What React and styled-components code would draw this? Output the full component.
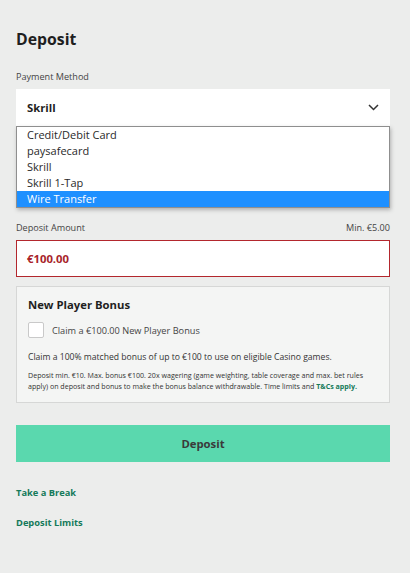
import React from "react";
import styled, { createGlobalStyle } from "styled-components";

const GlobalStyle = createGlobalStyle`
  html, body {
    margin: 0;
    padding: 0;
    background: #ecedec;
  }
  body {
    font-family: "Open Sans", "Noto Sans", sans-serif;
    color: #222;
  }
`;

const Page = styled.div`
  width: 410px;
  box-sizing: border-box;
  padding: 27px 20px 40px 16px;
  display: flex;
  flex-direction: column;
`;

const Title = styled.h1`
  margin: 0;
  font-size: 15.8px;
  font-weight: 700;
  color: #1f1f1f;
  line-height: 24px;
`;

const LabelRow = styled.div`
  display: flex;
  justify-content: space-between;
  align-items: center;
  font-size: 9.1px;
  color: #444;
  margin-top: ${(p) => p.top || 0}px;
  margin-bottom: 6px;
  line-height: 12px;
`;

const SelectWrap = styled.div`
  position: relative;
`;

const SelectBox = styled.div`
  height: 37px;
  background: #fff;
  display: flex;
  align-items: center;
  justify-content: space-between;
  padding: 0 11px;
  font-size: 11.3px;
  font-weight: 700;
  color: #1f1f1f;
`;

const Menu = styled.ul`
  position: absolute;
  left: 0;
  right: 0;
  top: 37px;
  margin: 0;
  padding: 0;
  list-style: none;
  background: #fff;
  border: 1px solid #8f8f8f;
  box-shadow: 1px 2px 4px rgba(0, 0, 0, 0.25);
  z-index: 2;
`;

const Option = styled.li`
  height: 16px;
  line-height: 16px;
  padding-left: 10px;
  font-size: 11px;
  color: ${(p) => (p.active ? "#fff" : "#2a2a2a")};
  background: ${(p) => (p.active ? "#1e90ff" : "transparent")};
`;

const HiddenField = styled.div`
  height: 38px;
  box-sizing: border-box;
  margin-top: 37px;
  background: #fff;
  border: 1px solid #b3272d;
`;

const AmountBox = styled.div`
  height: 37px;
  box-sizing: border-box;
  background: #fff;
  border: 1.5px solid #b3272d;
  display: flex;
  align-items: center;
  padding-left: 10px;
  font-size: 11.3px;
  font-weight: 700;
  color: #a8242a;
`;

const BonusCard = styled.div`
  margin-top: 9px;
  background: #f4f5f4;
  border: 1px solid #d6d7d6;
  padding: 10px 11px 11px 11px;
`;

const BonusTitle = styled.div`
  font-size: 11.3px;
  font-weight: 700;
  color: #1f1f1f;
  line-height: 16px;
`;

const CheckRow = styled.label`
  display: flex;
  align-items: center;
  gap: 8px;
  margin-top: 9px;
  font-size: 9.2px;
  color: #444;
`;

const CheckBox = styled.span`
  width: 14px;
  height: 14px;
  background: #fff;
  border: 1px solid #c9c9c9;
  border-radius: 2px;
`;

const BodyText = styled.p`
  margin: 13px 0 0;
  font-size: 8.6px;
  color: #333;
  line-height: 12px;
`;

const SmallText = styled.p`
  margin: 7px 0 0;
  font-size: 7.1px;
  color: #333;
  line-height: 10.5px;
`;

const TcLink = styled.span`
  color: #157a5a;
  font-weight: 700;
`;

const DepositButton = styled.button`
  margin-top: 22px;
  height: 37px;
  border: none;
  background: #5ad8ae;
  color: #3a3a3a;
  font-family: inherit;
  font-size: 11.3px;
  font-weight: 700;
  width: 100%;
`;

const Links = styled.div`
  display: flex;
  flex-direction: column;
  gap: 14px;
  margin-top: 23px;
`;

const TextLink = styled.a`
  font-size: 9.3px;
  font-weight: 700;
  color: #157a5a;
  text-decoration: none;
  line-height: 16px;
`;

const Chevron = () => (
  <svg width="11" height="7" viewBox="0 0 11 7" fill="none">
    <path d="M1 1l4.5 4.5L10 1" stroke="#333" strokeWidth="1.5" />
  </svg>
);

const options = ["Credit/Debit Card", "paysafecard", "Skrill", "Skrill 1-Tap", "Wire Transfer"];

export default function App() {
  return (
    <>
      <GlobalStyle />
      <Page>
        <Title>Deposit</Title>
        <LabelRow top={20}>Payment Method</LabelRow>
        <SelectWrap>
          <SelectBox>
            <span>Skrill</span>
            <Chevron />
          </SelectBox>
          <Menu>
            {options.map((o) => (
              <Option key={o} active={o === "Wire Transfer"}>
                {o}
              </Option>
            ))}
          </Menu>
          <HiddenField />
        </SelectWrap>
        <LabelRow top={21}>
          <span>Deposit Amount</span>
          <span>Min. €5.00</span>
        </LabelRow>
        <AmountBox>€100.00</AmountBox>
        <BonusCard>
          <BonusTitle>New Player Bonus</BonusTitle>
          <CheckRow>
            <CheckBox />
            Claim a €100.00 New Player Bonus
          </CheckRow>
          <BodyText>
            Claim a 100% matched bonus of up to €100 to use on eligible Casino games.
          </BodyText>
          <SmallText>
            Deposit min. €10. Max. bonus €100. 20x wagering (game weighting, table coverage and max. bet rules
            apply) on deposit and bonus to make the bonus balance withdrawable. Time limits and{" "}
            <TcLink>T&amp;Cs apply.</TcLink>
          </SmallText>
        </BonusCard>
        <DepositButton>Deposit</DepositButton>
        <Links>
          <TextLink href="#">Take a Break</TextLink>
          <TextLink href="#">Deposit Limits</TextLink>
        </Links>
      </Page>
    </>
  );
}
